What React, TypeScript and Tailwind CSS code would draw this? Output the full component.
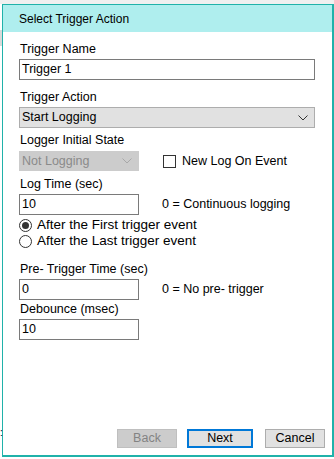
import React from "react";

const font = { fontFamily: '"Liberation Sans", Arial, sans-serif' };

function Chevron({ color }: { color: string }) {
  return (
    <svg width="10" height="6" viewBox="0 0 10 6" fill="none">
      <path d="M0.5 0.5 L5 5 L9.5 0.5" stroke={color} strokeWidth="1" />
    </svg>
  );
}

function TextBox({ value, w }: { value: string; w: string }) {
  return (
    <div className={`${w} h-[21px] border border-[#7a7a7a] bg-white flex items-center pl-[2px] text-[12.5px] text-black leading-none`}>
      {value}
    </div>
  );
}

function Label({ children, mt }: { children: React.ReactNode; mt: string }) {
  return <div className={`${mt} h-4 leading-4 pl-[1px] text-[12.5px] text-black`}>{children}</div>;
}

export default function App() {
  return (
    <div className="w-[334px] h-[459px] bg-white relative overflow-hidden" style={font}>
      <div className="h-[4px] bg-[#f0f0f0]" />
      <div className="absolute left-0 top-[30px] w-[2px] h-[16px] bg-[#d9d9d9]" />
      <div className="absolute left-0 top-[428px] text-[10px] leading-none text-black">:</div>
      <div className="ml-[2px] w-[332px] h-[453px] border-t border-l border-r-2 border-b-2 border-[#20b2aa] flex flex-col">
        <div className="h-[27px] bg-[#afeeee] flex items-center pl-[16px] text-[12px] text-black">
          Select Trigger Action
        </div>
        <div className="flex-1 flex flex-col pl-[16px] pr-[15px]">
          <Label mt="mt-[9px]">Trigger Name</Label>
          <div className="mt-[2px]">
            <TextBox value="Trigger 1" w="w-[296px]" />
          </div>
          <Label mt="mt-[9px]">Trigger Action</Label>
          <div className="mt-[2px] w-[296px] h-[21px] bg-[#e1e1e1] border border-[#adadad] flex items-center justify-between pl-[2px] pr-[6px] text-[12.5px] text-black">
            <span>Start Logging</span>
            <Chevron color="#333" />
          </div>
          <Label mt="mt-[4px]">Logger Initial State</Label>
          <div className="mt-[3px] h-[20px] flex items-center">
            <div className="w-[120px] h-[20px] bg-[#cccccc] border border-[#cccccc] flex items-center justify-between pl-[2px] pr-[6px] text-[12.5px] text-[#8a8a8a]">
              <span>Not Logging</span>
              <Chevron color="#a8a8a8" />
            </div>
            <div className="ml-[24px] w-[13px] h-[13px] border border-[#333] bg-white" />
            <span className="ml-[6px] text-[12.5px] text-black">New Log On Event</span>
          </div>
          <Label mt="mt-[5px]">Log Time (sec)</Label>
          <div className="mt-[2px] flex items-center">
            <TextBox value="10" w="w-[120px]" />
            <span className="ml-[23px] text-[12.5px] text-black">0 = Continuous logging</span>
          </div>
          <div className="mt-[2px] h-4 flex items-center">
            <div className="w-[13px] h-[13px] rounded-full border border-[#333] bg-white flex items-center justify-center">
              <div className="w-[7px] h-[7px] rounded-full bg-[#333]" />
            </div>
            <span className="ml-[5px] text-[13.5px] text-black">After the First trigger event</span>
          </div>
          <div className="h-4 flex items-center">
            <div className="w-[13px] h-[13px] rounded-full border border-[#333] bg-white" />
            <span className="ml-[5px] text-[13.5px] text-black">After the Last trigger event</span>
          </div>
          <Label mt="mt-[12px]">Pre- Trigger Time (sec)</Label>
          <div className="mt-[2px] flex items-center">
            <TextBox value="0" w="w-[120px]" />
            <span className="ml-[23px] text-[12.5px] text-black">0 = No pre- trigger</span>
          </div>
          <Label mt="mt-[1px]">Debounce (msec)</Label>
          <div className="mt-[2px]">
            <TextBox value="10" w="w-[120px]" />
          </div>
          <div className="flex-1" />
          <div className="mb-[7px] -mr-[8px] flex justify-end items-center text-[12.5px]">
            <div className="w-[60px] h-[19px] bg-[#cccccc] border border-[#bfbfbf] flex items-center justify-center text-[#838383]">
              Back
            </div>
            <div className="ml-[10px] w-[66px] h-[19px] bg-[#e1e1e1] border-2 border-[#0078d7] flex items-center justify-center text-black">
              Next
            </div>
            <div className="ml-[12px] w-[60px] h-[19px] bg-[#e1e1e1] border border-[#adadad] flex items-center justify-center text-black">
              Cancel
            </div>
          </div>
        </div>
      </div>
    </div>
  );
}
